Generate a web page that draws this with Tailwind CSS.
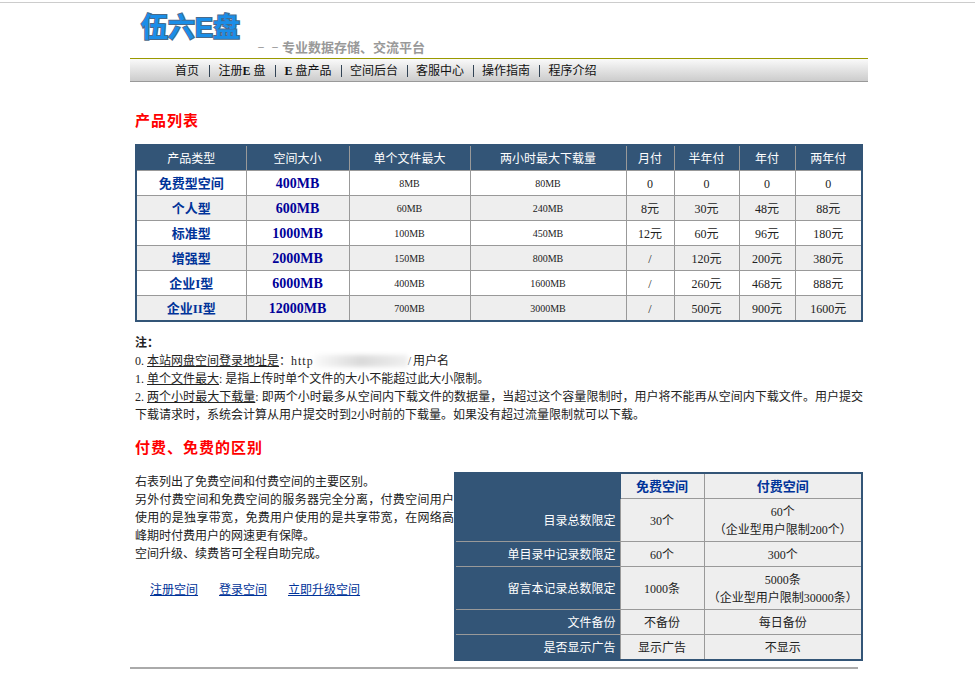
<!DOCTYPE html>
<html lang="zh-CN">
<head>
<meta charset="UTF-8">
<title>伍六E盘 - 产品列表</title>
<script src="https://cdn.jsdelivr.net/npm/@tailwindcss/browser@4"></script>
</head>
<body class="bg-white text-[12px] leading-[18px] text-[#222] font-['Liberation_Serif','Noto_Sans_CJK_SC',serif] overflow-hidden">
<div class="h-[690px] pt-[2px]">
  <div class="h-[2px] border-t border-[#ccc]"></div>
  <div class="ml-[130px] w-[738px]">
    <!-- logo and slogan -->
    <div class="h-[54px] flex items-end">
      <div class="w-[124px] h-[54px] pl-[11px] pt-[7px] font-['Liberation_Sans','Noto_Sans_CJK_SC',sans-serif] text-[27px] leading-[34px] font-bold text-[#1a8ee8] [-webkit-text-stroke:2px_#4a6a8a] [paint-order:stroke_fill] whitespace-nowrap">伍六E盘</div>
      <div class="flex items-center text-[13px] leading-[16px] mb-[2px] font-bold text-[#999] whitespace-nowrap">
        <span class="w-[14px] text-center text-[8px]">－</span><span class="w-[14px] text-center text-[8px]">－</span>专业数据存储、交流平台
      </div>
    </div>
    <!-- nav -->
    <div class="h-[24px] pt-[2px] border-t border-[#999900] border-b border-b-[#999] bg-gradient-to-b from-[#fafafa] to-[#ccc] pl-[45px] flex items-center text-[#111] text-center">
      <a class="w-[35px] text-left border-r border-[#345] leading-[12px]">首页</a>
      <a class="w-[66px] pr-[1px] border-r border-[#345] leading-[12px]">注册<b>E</b> 盘</a>
      <a class="w-[66px] pr-[1px] border-r border-[#345] leading-[12px]"><b>E</b> 盘产品</a>
      <a class="w-[66px] pr-[1px] border-r border-[#345] leading-[12px]">空间后台</a>
      <a class="w-[66px] pr-[1px] border-r border-[#345] leading-[12px]">客服中心</a>
      <a class="w-[66px] pr-[1px] border-r border-[#345] leading-[12px]">操作指南</a>
      <a class="w-[66px] pr-[1px] leading-[12px]">程序介绍</a>
    </div>

    <div class="pl-[5px]">
      <h2 class="mt-[30px] text-[15px] leading-[18px] font-bold text-[#f00] tracking-[1px]">产品列表</h2>

      <table class="mt-[14px] w-[728px] table-fixed border-collapse border-2 border-[#335577] text-center">
        <thead>
          <tr class="h-[25px] bg-[#335577] text-white font-normal [&_th]:pt-[2px]">
            <th class="w-[110px] font-normal border-r border-[#999]">产品类型</th>
            <th class="w-[103px] font-normal border-r border-[#999]">空间大小</th>
            <th class="w-[121px] font-normal border-r border-[#999]">单个文件最大</th>
            <th class="w-[156px] font-normal border-r border-[#999]">两小时最大下载量</th>
            <th class="w-[48px] font-normal border-r border-[#999]">月付</th>
            <th class="w-[65px] font-normal border-r border-[#999]">半年付</th>
            <th class="w-[56px] font-normal border-r border-[#999]">年付</th>
            <th class="font-normal">两年付</th>
          </tr>
        </thead>
        <tbody class="[&_td]:border [&_td]:border-[#999] [&_td]:h-[25px] [&_td]:pt-[2px]">
          <tr class="bg-white">
            <td class="text-[13px] font-bold text-[#003399]">免费型空间</td>
            <td class="text-[14px] font-bold text-[#000099]">400MB</td>
            <td class="text-[10px]">8MB</td><td class="text-[10px]">80MB</td><td>0</td><td>0</td><td>0</td><td>0</td>
          </tr>
          <tr class="bg-[#eeeeee]">
            <td class="text-[13px] font-bold text-[#003399]">个人型</td>
            <td class="text-[14px] font-bold text-[#000099]">600MB</td>
            <td class="text-[10px]">60MB</td><td class="text-[10px]">240MB</td><td>8元</td><td>30元</td><td>48元</td><td>88元</td>
          </tr>
          <tr class="bg-white">
            <td class="text-[13px] font-bold text-[#003399]">标准型</td>
            <td class="text-[14px] font-bold text-[#000099]">1000MB</td>
            <td class="text-[10px]">100MB</td><td class="text-[10px]">450MB</td><td>12元</td><td>60元</td><td>96元</td><td>180元</td>
          </tr>
          <tr class="bg-[#eeeeee]">
            <td class="text-[13px] font-bold text-[#003399]">增强型</td>
            <td class="text-[14px] font-bold text-[#000099]">2000MB</td>
            <td class="text-[10px]">150MB</td><td class="text-[10px]">800MB</td><td>/</td><td>120元</td><td>200元</td><td>380元</td>
          </tr>
          <tr class="bg-white">
            <td class="text-[13px] font-bold text-[#003399]">企业I型</td>
            <td class="text-[14px] font-bold text-[#000099]">6000MB</td>
            <td class="text-[10px]">400MB</td><td class="text-[10px]">1600MB</td><td>/</td><td>260元</td><td>468元</td><td>888元</td>
          </tr>
          <tr class="bg-[#eeeeee] h-[26px]">
            <td class="text-[13px] font-bold text-[#003399]">企业II型</td>
            <td class="text-[14px] font-bold text-[#000099]">12000MB</td>
            <td class="text-[10px]">700MB</td><td class="text-[10px]">3000MB</td><td>/</td><td>500元</td><td>900元</td><td>1600元</td>
          </tr>
        </tbody>
      </table>

      <div class="mt-[12px] w-[728px]">
        <p class="font-bold">注：</p>
        <p class="whitespace-nowrap">0. <u>本站网盘空间登录地址是</u>：<span class="tracking-[1px]">http</span><span class="relative inline-block w-[94px] h-[12px] align-[-2px]"><span class="absolute inset-0 bg-gradient-to-r from-[#fafafa] via-[#dadada] to-[#f0f0f0] blur-[2px]"></span></span><span class="pr-[2px]">/</span>用户名</p>
        <p class="whitespace-nowrap">1. <u>单个文件最大</u>: 是指上传时单个文件的大小不能超过此大小限制。</p>
        <p class="text-justify">2. <u>两个小时最大下载量</u>: 即两个小时最多从空间内下载文件的数据量，当超过这个容量限制时，用户将不能再从空间内下载文件。用户提交下载请求时，系统会计算从用户提交时到2小时前的下载量。如果没有超过流量限制就可以下载。</p>
      </div>

      <h2 class="mt-[15px] text-[15px] leading-[18px] font-bold text-[#f00] tracking-[1px]">付费、免费的区别</h2>

      <div class="mt-[16px] flex">
        <div class="w-[319px] text-justify">
          <p>右表列出了免费空间和付费空间的主要区别。</p>
          <p>另外付费空间和免费空间的服务器完全分离，付费空间用户使用的是独享带宽，免费用户使用的是共享带宽，在网络高峰期时付费用户的网速更有保障。</p>
          <p>空间升级、续费皆可全程自助完成。</p>
          <div class="mt-[18px] pl-[15px] flex gap-[21px] text-[#003399] underline">
            <a>注册空间</a><a>登录空间</a><a>立即升级空间</a>
          </div>
        </div>
        <table class="-mt-[1px] w-[409px] h-[189px] table-fixed border-collapse border-2 border-[#335577] text-center [&_td]:pt-[2px] [&_td]:border [&_td]:border-[#999] bg-[#eeeeee]">
          <tr class="h-[25px]">
            <td class="w-[165px] !border-[#335577] bg-[#335577]"></td>
            <td class="w-[84px] text-[13px] font-bold text-[#003399]">免费空间</td>
            <td class="text-[13px] font-bold text-[#003399]">付费空间</td>
          </tr>
          <tr class="h-[43px]">
            <td class="bg-[#335577] text-white text-right pr-[4px] !border-l-[#335577]">目录总数限定</td>
            <td>30个</td>
            <td>60个<br>（企业型用户限制200个）</td>
          </tr>
          <tr class="h-[25px]">
            <td class="bg-[#335577] text-white text-right pr-[4px] !border-l-[#335577]">单目录中记录数限定</td>
            <td>60个</td>
            <td>300个</td>
          </tr>
          <tr class="h-[43px]">
            <td class="bg-[#335577] text-white text-right pr-[4px] !border-l-[#335577]">留言本记录总数限定</td>
            <td>1000条</td>
            <td>5000条<br>（企业型用户限制30000条）</td>
          </tr>
          <tr class="h-[25px]">
            <td class="bg-[#335577] text-white text-right pr-[4px] !border-l-[#335577]">文件备份</td>
            <td>不备份</td>
            <td>每日备份</td>
          </tr>
          <tr class="h-[25px]">
            <td class="bg-[#335577] text-white text-right pr-[4px] !border-l-[#335577]">是否显示广告</td>
            <td>显示广告</td>
            <td>不显示</td>
          </tr>
        </table>
      </div>
    </div>
    <div class="mt-[6px] w-[728px] border-t-2 border-[#aaa]"></div>
  </div>
</div>
</body>
</html>
